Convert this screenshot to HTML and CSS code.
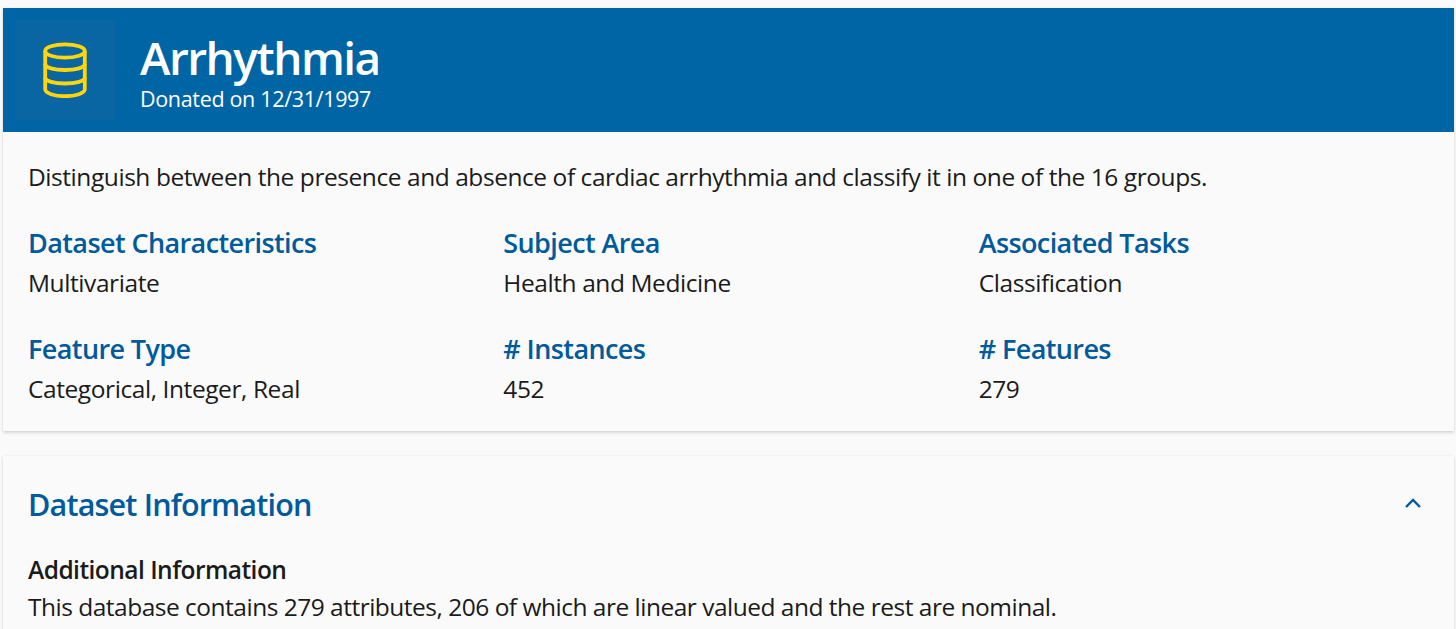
FILE: index.html
```html
<!DOCTYPE html>
<html lang="en">
<head>
    <meta charset="UTF-8">
    <meta name="viewport" content="width=device-width, initial-scale=1.0">
    <title>Arrhythmia</title>
    <link rel="stylesheet" href="styles.css">
</head>
<body>
    <div class="card summary">
        <div class="header">
            <div class="logo">
                <svg width="44" height="56" viewBox="0 0 44 56" fill="none" stroke="#ffd50c" stroke-width="3.8">
                    <ellipse cx="22" cy="9" rx="19.8" ry="6.7"/>
                    <path d="M2.2 9V47.3C2.2 51.2 11 54.2 22 54.2S41.8 51.2 41.8 47.300V9"/>
                    <path d="M2.2 22C2.2 25.5 11 28 22 28S41.8 25.5 41.800 22"/>
                    <path d="M2.2 35.5C2.2 39 11 41.500 22 41.500S41.8 39 41.8 35.500"/>
                </svg>
            </div>
            <div class="title">
                <h1>Arrhythmia</h1>
                <p>Donated on 12/31/1997</p>
            </div>
        </div>
        <div class="content">
            <p class="description">Distinguish between the presence and absence of cardiac arrhythmia and classify it in one of the 16 groups.</p>
            <div class="grid">
                <div class="item">
                    <h2>Dataset Characteristics</h2>
                    <p>Multivariate</p>
                </div>
                <div class="item">
                    <h2>Subject Area</h2>
                    <p>Health and Medicine</p>
                </div>
                <div class="item">
                    <h2>Associated Tasks</h2>
                    <p>Classification</p>
                </div>
                <div class="item">
                    <h2>Feature Type</h2>
                    <p>Categorical, Integer, Real</p>
                </div>
                <div class="item">
                    <h2># Instances</h2>
                    <p>452</p>
                </div>
                <div class="item">
                    <h2># Features</h2>
                    <p>279</p>
                </div>
            </div>
        </div>
    </div>

    <div class="card info">
        <div class="info-header">
            <h1>Dataset Information</h1>
            <svg width="18" height="12" viewBox="0 0 18 12" fill="none" stroke="#005a9c" stroke-width="2.4">
                <path d="M2 9L9 2L16 9"/>
            </svg>
        </div>
        <h3>Additional Information</h3>
        <p class="text">This database contains 279 attributes, 206 of which are linear valued and the rest are nominal.</p>
    </div>
</body>
</html>
```

FILE: styles.css
```css
* {
    box-sizing: border-box;
}

body {
    margin: 0;
    padding: 8px 2px 0 3px;
    height: 629px;
    overflow: hidden;
    background-color: #fafafa;
    color: #1b1b1b;
    font-family: "Open Sans", "Noto Sans", sans-serif;
    font-size: 24.5px;
}

h1, h2, h3, p {
    margin: 0;
    font-weight: 400;
    white-space: nowrap;
}

.card {
    background-color: #fafafa;
    box-shadow: 0 2px 3px rgba(0, 0, 0, 0.13), 0 0 3px rgba(0, 0, 0, 0.06);
}

.summary {
    height: 423px;
}

.header {
    display: flex;
    height: 124px;
    padding: 12px 12px;
    background-color: #0065a4;
    color: #ffffff;
}

.logo {
    display: flex;
    align-items: center;
    justify-content: center;
    width: 100px;
    height: 100px;
    background-color: #0a65a3;
}

.title {
    padding: 9px 0 0 25px;
}

.title h1 {
    font-size: 46px;
    font-weight: 600;
    line-height: 56px;
    letter-spacing: -1.5px;
}

.title p {
    margin-top: 3px;
    font-size: 21.5px;
    line-height: 22px;
    letter-spacing: -0.33px;
}

.content {
    padding: 25px 0 0 25px;
}

.description {
    line-height: 40px;
    letter-spacing: -0.44px;
}

.grid {
    display: grid;
    grid-template-columns: repeat(3, 1fr);
    row-gap: 26px;
    margin-top: 26px;
}

.item h2 {
    color: #005a9c;
    font-size: 27px;
    font-weight: 600;
    line-height: 40px;
    letter-spacing: -0.6px;
}

.item p {
    line-height: 40px;
    letter-spacing: -0.42px;
}

.info {
    height: 200px;
    margin-top: 25px;
    padding: 24px 32px 0 25px;
}

.info-header {
    display: flex;
    align-items: center;
    justify-content: space-between;
    height: 48px;
}

.info-header h1 {
    color: #005a9c;
    font-size: 30.5px;
    font-weight: 600;
    letter-spacing: -0.82px;
}

.info h3 {
    margin-top: 23px;
    font-size: 24.5px;
    font-weight: 600;
    line-height: 37px;
    letter-spacing: -0.53px;
}

.text {
    line-height: 38px;
    letter-spacing: -0.5px;
}
```
